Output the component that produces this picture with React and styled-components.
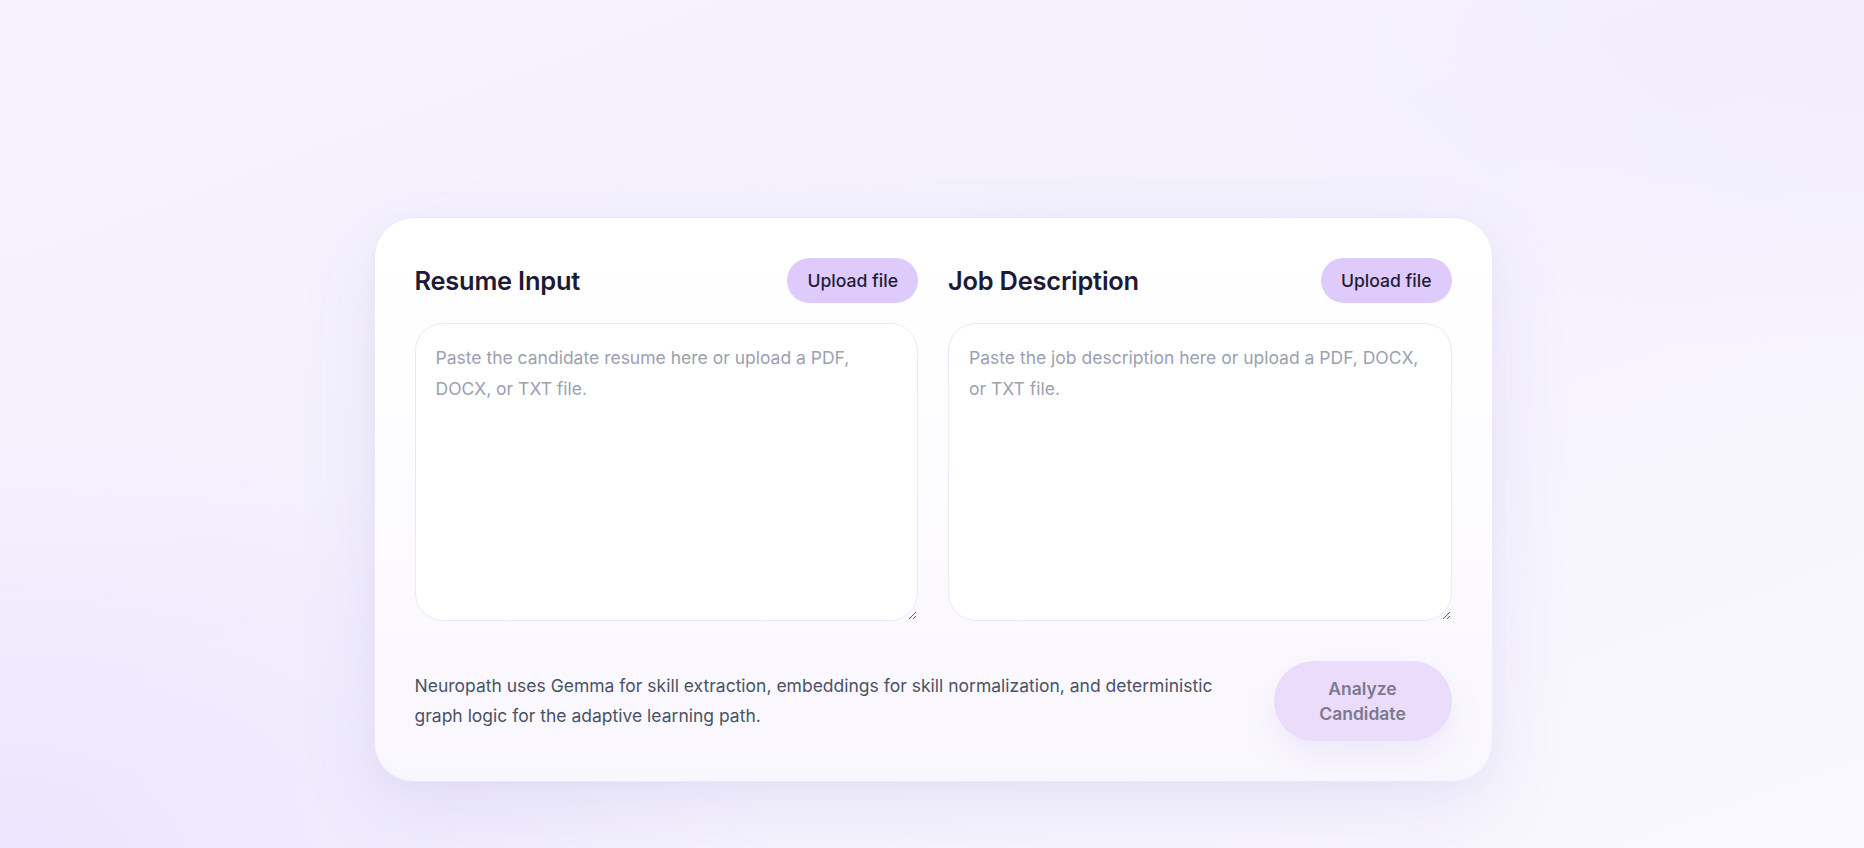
import React from 'react';
import styled, { createGlobalStyle } from 'styled-components';

const GlobalStyle = createGlobalStyle`
  html, body {
    margin: 0;
    padding: 0;
  }
  body {
    font-family: Inter, "Noto Sans", "Liberation Sans", sans-serif;
    -webkit-font-smoothing: antialiased;
  }
  * {
    box-sizing: border-box;
  }
`;

const Page = styled.div`
  min-height: 100vh;
  display: flex;
  justify-content: center;
  align-items: flex-start;
  padding: 217px 0 0 2px;
  background:
    radial-gradient(ellipse 60% 70% at 0% 100%, #ebe5fd 0%, rgba(235, 229, 253, 0) 70%),
    radial-gradient(ellipse 50% 60% at 100% 0%, #f1edfd 0%, rgba(241, 237, 253, 0) 70%),
    linear-gradient(160deg, #f6f3fe 0%, #f4f1fd 45%, #f9f8fe 100%);
`;

const Card = styled.section`
  width: 1119px;
  padding: 40px;
  border-radius: 40px;
  border: 1px solid #ece8fa;
  background: linear-gradient(180deg, #ffffff 0%, #fdfcff 40%, #f9f7fe 100%);
  box-shadow: 0 30px 80px rgba(112, 92, 200, 0.1), 0 6px 20px rgba(112, 92, 200, 0.04);
`;

const Columns = styled.div`
  display: grid;
  grid-template-columns: 1fr 1fr;
  gap: 30px;
`;

const Field = styled.div`
  display: flex;
  flex-direction: column;
  gap: 20px;
`;

const FieldHeader = styled.div`
  display: flex;
  align-items: center;
  justify-content: space-between;
`;

const Title = styled.h2`
  margin: 0;
  font-size: 25.4px;
  font-weight: 600;
  letter-spacing: -0.2px;
  color: #1c1a36;
`;

const UploadButton = styled.button`
  font-family: inherit;
  font-size: 17.6px;
  font-weight: 500;
  line-height: 25px;
  color: #1f1d35;
  background: #dfcafc;
  border: none;
  border-radius: 999px;
  padding: 10px 20px;
  cursor: pointer;
`;

const TextArea = styled.textarea`
  width: 100%;
  height: 298px;
  padding: 18px 20px;
  border: 1px solid #ebe8fa;
  border-radius: 28px;
  background: #ffffff;
  font-family: inherit;
  font-size: 17.5px;
  line-height: 31px;
  color: #1f1d35;
  outline: none;

  &::placeholder {
    color: #9ca0b0;
  }
`;

const Footer = styled.div`
  display: flex;
  align-items: center;
  justify-content: space-between;
  gap: 40px;
  margin-top: 40px;
`;

const Note = styled.p`
  margin: 0;
  max-width: 820px;
  font-size: 17.5px;
  line-height: 30px;
  color: #4a5266;
`;

const AnalyzeButton = styled.button`
  flex: 0 0 178px;
  height: 80px;
  font-family: inherit;
  font-size: 17.5px;
  font-weight: 600;
  line-height: 25px;
  color: #7b7a8c;
  background: #ebdcfc;
  border: none;
  border-radius: 999px;
  padding: 0 30px;
  box-shadow: 0 14px 34px rgba(130, 100, 210, 0.1);
  cursor: not-allowed;
`;

const fields = [
  {
    title: 'Resume Input',
    placeholder: 'Paste the candidate resume here or upload a PDF, DOCX, or TXT file.',
  },
  {
    title: 'Job Description',
    placeholder: 'Paste the job description here or upload a PDF, DOCX, or TXT file.',
  },
];

const App = () => {
  return (
    <>
      <GlobalStyle />
      <Page>
        <Card>
          <Columns>
            {fields.map((f) => (
              <Field key={f.title}>
                <FieldHeader>
                  <Title>{f.title}</Title>
                  <UploadButton type="button">Upload file</UploadButton>
                </FieldHeader>
                <TextArea placeholder={f.placeholder} />
              </Field>
            ))}
          </Columns>
          <Footer>
            <Note>
              Neuropath uses Gemma for skill extraction, embeddings for skill normalization, and
              deterministic graph logic for the adaptive learning path.
            </Note>
            <AnalyzeButton type="button" disabled>
              Analyze Candidate
            </AnalyzeButton>
          </Footer>
        </Card>
      </Page>
    </>
  );
};

export default App;
